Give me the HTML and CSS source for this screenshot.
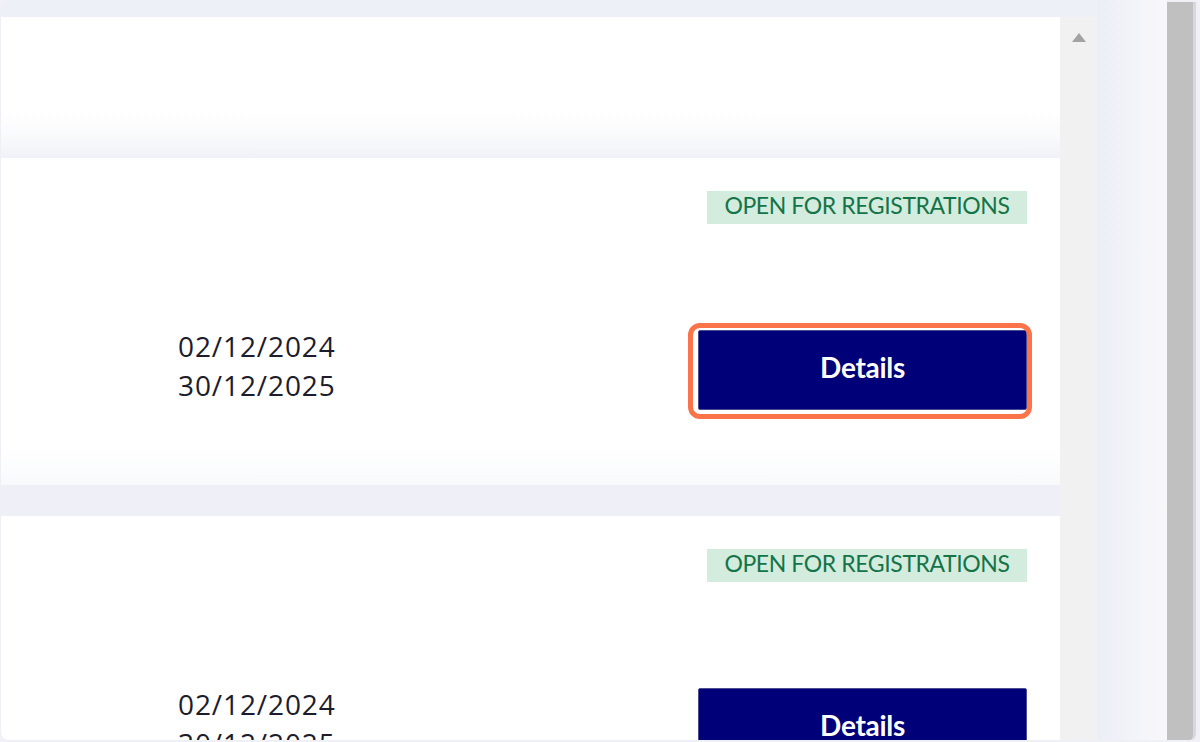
FILE: index.html
```html
<!DOCTYPE html>
<html lang="en">
<head>
<meta charset="utf-8">
<title>Events</title>
<link rel="stylesheet" href="styles.css">
</head>
<body>
<div class="screen">
  <div class="page">
    <div class="app">
      <div class="content">
        <div class="header"></div>
        <div class="card">
          <div class="badge-row"><span class="badge">OPEN FOR REGISTRATIONS</span></div>
          <div class="main-row">
            <div class="dates">
              <div>02/12/2024</div>
              <div>30/12/2025</div>
            </div>
            <div class="action">
              <button class="details">Details</button>
              <span class="highlight"></span>
            </div>
          </div>
        </div>
        <div class="card">
          <div class="badge-row"><span class="badge">OPEN FOR REGISTRATIONS</span></div>
          <div class="main-row">
            <div class="dates">
              <div>02/12/2024</div>
              <div>30/12/2025</div>
            </div>
            <div class="action">
              <button class="details">Details</button>
            </div>
          </div>
        </div>
      </div>
      <div class="vscroll"><span class="arrow-up"></span></div>
    </div>
    <div class="gutter"></div>
  </div>
  <div class="outer-scroll"></div>
</div>
</body>
</html>
```

FILE: styles.css
```css
html, body {
  margin: 0;
  padding: 0;
  background: #f1f1f7;
}

.screen {
  width: 1200px;
  height: 742px;
  box-sizing: border-box;
  display: flex;
  padding: 0 4px 2px 1px;
  background: #efeff6;
  border-radius: 10px;
  overflow: hidden;
}

.page {
  width: 1166px;
  display: flex;
  background: #eef0f8;
  overflow: hidden;
  border-bottom-left-radius: 8px;
}

.app {
  width: 1096px;
  margin-top: 17px;
  display: flex;
}

.content {
  width: 1059px;
  display: flex;
  flex-direction: column;
  gap: 31px;
  background: #eff0f7;
  overflow: hidden;
}

.header {
  height: 141px;
  flex: none;
  margin-bottom: -31px;
  background: linear-gradient(to bottom, #ffffff 0, #ffffff 66%, #fafbfc 82%, #f1f2f8 100%);
}

.card {
  height: 327px;
  flex: none;
  box-sizing: border-box;
  padding: 33px 33px 0 177px;
  background: linear-gradient(to bottom, #ffffff 0, #ffffff 88%, #fbfcfd 96%, #f8f9fb 100%);
}

.badge-row {
  display: flex;
  justify-content: flex-end;
}

.badge {
  width: 320px;
  height: 33px;
  box-sizing: border-box;
  padding-bottom: 4px;
  display: flex;
  align-items: center;
  justify-content: center;
  background: #d3ecdd;
  color: #137449;
  font-family: Lato, "Liberation Sans", sans-serif;
  font-size: 23px;
  letter-spacing: -0.4px;
  line-height: 1;
}

.main-row {
  display: flex;
  justify-content: space-between;
  align-items: flex-start;
  margin-top: 106px;
}

.dates {
  margin-top: -3px;
  font-family: "Open Sans", "Liberation Sans", sans-serif;
  font-size: 28px;
  line-height: 39px;
  color: #1c1c2a;
  letter-spacing: 0.9px;
}

.action {
  position: relative;
  width: 329px;
}

.details {
  display: block;
  width: 329px;
  height: 80px;
  margin: 0;
  padding: 0 0 6px;
  border: 1px solid #4c4c94;
  border-radius: 2px;
  background: #000078;
  color: #ffffff;
  font-family: Lato, "Liberation Sans", sans-serif;
  font-weight: 700;
  font-size: 28px;
  letter-spacing: -0.3px;
}

.highlight {
  position: absolute;
  left: -10px;
  top: -7px;
  right: -5px;
  bottom: -9px;
  border: 5px solid #fb7349;
  border-radius: 12px;
  pointer-events: none;
}

.vscroll {
  width: 37px;
  background: #f1f1f1;
  display: flex;
  justify-content: center;
  padding-top: 16px;
  box-sizing: border-box;
}

.arrow-up {
  width: 0;
  height: 0;
  border-left: 7px solid transparent;
  border-right: 7px solid transparent;
  border-bottom: 9px solid #a3a3a3;
}

.gutter {
  width: 70px;
  background: linear-gradient(to right, #eceef6 0, #f2f3f9 45%, #f8f8fb 100%);
}

.outer-scroll {
  width: 29px;
  margin-top: 2px;
  background: #c0c0c0;
  border-right: 3px solid #d8d8dc;
  box-sizing: border-box;
  border-bottom-right-radius: 6px;
}
```
